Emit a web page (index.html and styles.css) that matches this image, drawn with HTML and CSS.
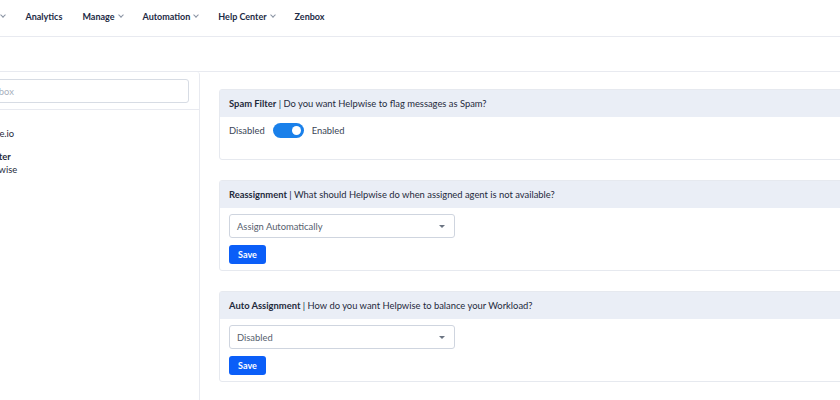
FILE: index.html
```html
<html>
	<head>
		<meta charset="utf-8">
		<title>Helpwise - Inbox Settings</title>
		<link rel="stylesheet" href="styles.css">
	</head>
	<body>
		<div class="page">
			<header class="topnav">
				<span class="nav-item">Inbox <i class="chevron"></i></span>
				<span class="nav-item">Analytics</span>
				<span class="nav-item">Manage <i class="chevron"></i></span>
				<span class="nav-item">Automation <i class="chevron"></i></span>
				<span class="nav-item">Help Center <i class="chevron"></i></span>
				<span class="nav-item">Zenbox</span>
			</header>
			<div class="toolbar"></div>
			<div class="layout">
				<aside class="sidebar">
					<div class="search-box">
						<input class="search-input" type="text" placeholder="Search Inbox">
					</div>
					<ul class="inbox-list">
						<li class="inbox-item">
							<span class="inbox-mail">Acme.io</span>
						</li>
						<li class="inbox-item">
							<span class="inbox-name">Twitter</span>
							<span class="inbox-mail">helpwise</span>
						</li>
					</ul>
				</aside>
				<main class="settings">
					<section class="setting-card">
						<div class="setting-head"><b>Spam Filter</b> | Do you want Helpwise to flag messages as Spam?</div>
						<div class="setting-body spam-body">
							<div class="toggle-row">
								<span>Disabled</span>
								<span class="toggle"><span class="toggle-knob"></span></span>
								<span>Enabled</span>
							</div>
						</div>
					</section>
					<section class="setting-card">
						<div class="setting-head"><b>Reassignment</b> | What should Helpwise do when assigned agent is not available?</div>
						<div class="setting-body">
							<div class="select-box">
								<span>Assign Automatically</span>
								<i class="caret"></i>
							</div>
							<button class="save-button">Save</button>
						</div>
					</section>
					<section class="setting-card">
						<div class="setting-head"><b>Auto Assignment</b> | How do you want Helpwise to balance your Workload?</div>
						<div class="setting-body">
							<div class="select-box">
								<span>Disabled</span>
								<i class="caret"></i>
							</div>
							<button class="save-button">Save</button>
						</div>
					</section>
				</main>
			</div>
		</div>
	</body>
</html>
```

FILE: styles.css
```css
body {
	margin: 0;
	overflow: hidden;
	background-color: #fff;
	font-family: Lato, "Liberation Sans", sans-serif;
	color: #1f2a3c;
}

.page {
	width: 1300px;
	margin-left: -60px;
	height: 400px;
	display: flex;
	flex-direction: column;
}

.topnav {
	box-sizing: border-box;
	height: 37px;
	padding: 0 0 4px 35px;
	border-bottom: 1px solid #e8eaf0;
	display: flex;
	align-items: center;
	gap: 20px;
	font-size: 9px;
	font-weight: bold;
	color: #1d2b45;
}

.nav-item {
	display: flex;
	align-items: center;
	gap: 3px;
}

.chevron {
	width: 3px;
	height: 3px;
	border-right: 1px solid #8a93a3;
	border-bottom: 1px solid #8a93a3;
	transform: rotate(45deg);
	margin-top: -2px;
	margin-left: 1px;
}

.toolbar {
	height: 34px;
	border-bottom: 1px solid #e8eaf0;
}

.layout {
	flex: 1;
	display: flex;
}

.sidebar {
	width: 259px;
	border-right: 1px solid #e8eaf0;
	border-top-right-radius: 3px;
}

.search-box {
	padding: 7px 10px 6px 10px;
	border-bottom: 1px solid #e8eaf0;
}

.search-input {
	box-sizing: border-box;
	width: 100%;
	height: 24px;
	border: 1px solid #d7dce4;
	border-radius: 3px;
	padding: 0 8px 0 10px;
	font-family: Lato, "Liberation Sans", sans-serif;
	font-size: 9.4px;
	outline: none;
}

.search-input::placeholder {
	color: #a8b0bd;
}

.inbox-list {
	list-style: none;
	margin: 0;
	padding: 18px 0 0 41px;
	font-size: 9.4px;
	line-height: 12px;
	color: #1f2a3c;
}

.inbox-item {
	display: flex;
	flex-direction: column;
	gap: 1px;
	margin-bottom: 11px;
}

.inbox-name {
	font-weight: bold;
}

.settings {
	flex: 1;
	padding: 17px 0 0 19px;
	display: flex;
	flex-direction: column;
	gap: 20px;
}

.setting-card {
	border: 1px solid #e6e9ef;
	border-radius: 3px;
	font-size: 9.4px;
}

.setting-head {
	height: 27px;
	line-height: 27px;
	padding-left: 9px;
	background-color: #eaeef6;
	color: #1f2a3c;
}

.setting-body {
	padding: 6px 9px 6px 9px;
	display: flex;
	flex-direction: column;
	align-items: flex-start;
	gap: 7px;
}

.spam-body {
	padding-bottom: 21px;
}

.toggle-row {
	display: flex;
	align-items: center;
	gap: 8px;
	color: #3a4556;
}

.toggle {
	width: 31px;
	height: 15px;
	border-radius: 8px;
	background-color: #1a80ea;
	display: flex;
	align-items: center;
	justify-content: flex-end;
	padding-right: 3px;
	box-sizing: border-box;
}

.toggle-knob {
	width: 9px;
	height: 9px;
	border-radius: 50%;
	background-color: #fff;
}

.select-box {
	box-sizing: border-box;
	width: 226px;
	height: 24px;
	border: 1px solid #cfd5df;
	border-radius: 3px;
	padding: 0 9px 0 7px;
	display: flex;
	align-items: center;
	justify-content: space-between;
	color: #56606e;
}

.caret {
	width: 0;
	height: 0;
	border-left: 3px solid transparent;
	border-right: 3px solid transparent;
	border-top: 3px solid #6b7482;
}

.save-button {
	width: 37px;
	height: 19px;
	border: none;
	border-radius: 3px;
	background-color: #0b5ef8;
	color: #fff;
	font-family: Lato, "Liberation Sans", sans-serif;
	font-size: 9px;
	font-weight: bold;
	padding: 0;
}
```
